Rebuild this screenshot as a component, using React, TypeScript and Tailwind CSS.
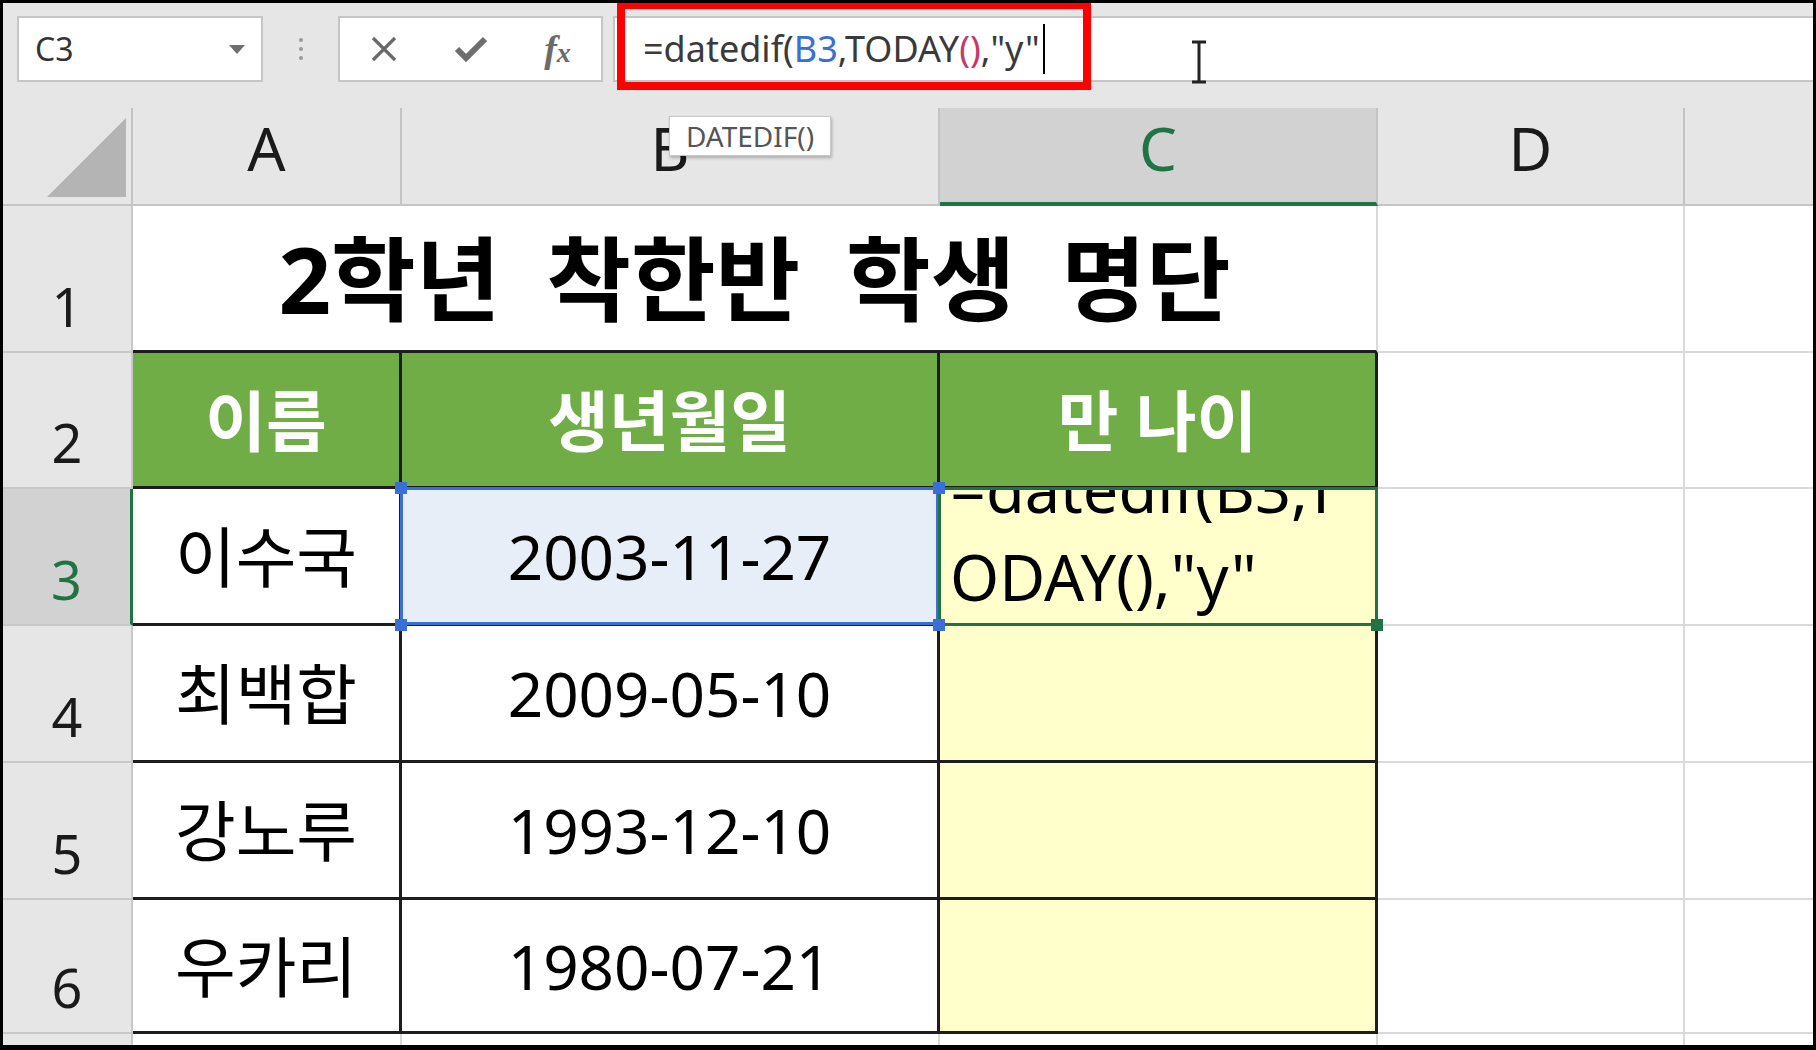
import React from "react";

const COLHEAD =
  "flex items-center justify-center border-r-2 border-b-2 border-[#c4c4c4] bg-[#e6e6e6] pb-[16px] text-[60px] leading-none text-[#1a1a1a]";
const ROWHEAD =
  "flex items-end justify-center border-r-2 border-b-2 border-[#c8c8c8] bg-[#e6e6e6] pb-[18px] text-[54px] leading-none text-[#1a1a1a]";
const GRID = "border-r-2 border-b-2 border-[#dadada] bg-white";
const TBL =
  "flex items-center justify-center border-r-[3px] border-b-[3px] border-[#1d1d1d] leading-none text-black";

const people = [
  { name: "이수국", birth: "2003-11-27" },
  { name: "최백합", birth: "2009-05-10" },
  { name: "강노루", birth: "1993-12-10" },
  { name: "우카리", birth: "1980-07-21" },
];

function Handle({ pos, color }: { pos: string; color: string }) {
  return <span className={`absolute z-20 h-[12px] w-[12px] ${pos} ${color}`} />;
}

export default function App() {
  return (
    <div className="relative flex h-[1050px] w-[1816px] flex-col overflow-hidden border-t-[3px] border-r-[3px] border-b-[5px] border-l-[3px] border-black bg-[#e6e6e6] font-['Noto_Sans','Noto_Sans_CJK_KR',sans-serif]">
      {/* FORMULA BAR */}
      <div className="flex h-[105px] shrink-0 items-start pt-[13px]">
        <div className="ml-[14px] flex h-[66px] w-[246px] items-center justify-between border-2 border-[#c6c6c6] bg-white pl-[16px] pr-[16px]">
          <span className="text-[32px] leading-none text-[#333]">C3</span>
          <svg width="16" height="9" viewBox="0 0 16 9">
            <polygon points="0,0 16,0 8,9" fill="#6f6f6f" />
          </svg>
        </div>
        <div className="flex h-[66px] w-[75px] flex-col items-center justify-center gap-[5px]">
          <span className="h-[4px] w-[4px] rounded-full bg-[#9a9a9a]" />
          <span className="h-[4px] w-[4px] rounded-full bg-[#9a9a9a]" />
          <span className="h-[4px] w-[4px] rounded-full bg-[#9a9a9a]" />
        </div>
        <div className="grid h-[66px] w-[265px] grid-cols-3 place-items-center border-2 border-[#c6c6c6] bg-white">
          <svg width="28" height="26" viewBox="0 0 28 26">
            <path d="M3 2 L25 24 M25 2 L3 24" stroke="#6a6a6a" strokeWidth="3.2" />
          </svg>
          <svg width="34" height="28" viewBox="0 0 34 28">
            <path d="M3 14 L12 23 L31 4" stroke="#6e6e6e" strokeWidth="6" fill="none" />
          </svg>
          <span className="font-['Liberation_Serif',serif] text-[38px] font-bold italic leading-none text-[#6b6b6b]">
            f<span className="text-[28px]">x</span>
          </span>
        </div>
        <div className="ml-[10px] flex h-[66px] flex-1 items-center border-2 border-r-0 border-[#c6c6c6] bg-white pl-[28px]">
          <span className="whitespace-nowrap text-[36px] leading-none text-[#3a3a3a]">
            =datedif(<span className="text-[#3a6fd3]">B3</span>,TODAY
            <span className="text-[#c8376a]">()</span>,"y"
          </span>
          <span className="ml-[3px] h-[50px] w-[2px] bg-black" />
        </div>
      </div>

      {/* SHEET */}
      <div className="grid flex-1 grid-cols-[130px_269px_538px_438px_307px_1fr] grid-rows-[98px_147px_136px_137px_137px_137px_134px_1fr]">
        {/* column header */}
        <div className="flex items-end justify-end border-r-2 border-b-2 border-[#c4c4c4] bg-[#e6e6e6] pr-[5px] pb-[7px]">
          <svg width="79" height="79" viewBox="0 0 79 79">
            <polygon points="79,0 79,79 0,79" fill="#b4b4b4" />
          </svg>
        </div>
        <div className={COLHEAD}>A</div>
        <div className={COLHEAD}>B</div>
        <div className="flex items-center justify-center border-r-2 border-b-4 border-r-[#c4c4c4] border-b-[#217346] bg-[#d2d2d2] pb-[14px] text-[60px] leading-none text-[#217346]">
          C
        </div>
        <div className={COLHEAD}>D</div>
        <div className="border-b-2 border-[#c4c4c4] bg-[#e6e6e6]" />

        {/* row 1 */}
        <div className={ROWHEAD}>1</div>
        <div className="col-span-3 flex items-center justify-center border-r-2 border-b-[3px] border-r-[#dadada] border-b-[#1d1d1d] bg-white pt-[2px]">
          <span className="text-[92px] font-bold leading-none text-black [word-spacing:22px]">
            2학년 착한반 학생 명단
          </span>
        </div>
        <div className={GRID} />
        <div className="border-b-2 border-[#dadada] bg-white" />

        {/* row 2 */}
        <div className={ROWHEAD}>2</div>
        {["이름", "생년월일", "만 나이"].map((h) => (
          <div key={h} className={`${TBL} bg-[#70ad47] text-[66px] font-bold text-white`}>
            {h}
          </div>
        ))}
        <div className={GRID} />
        <div className="border-b-2 border-[#dadada] bg-white" />

        {/* rows 3-6 */}
        {people.map((p, i) =>
          i === 0 ? (
            <React.Fragment key={p.name}>
              <div className="flex items-end justify-center border-r-[3px] border-b-2 border-r-[#217346] border-b-[#c8c8c8] bg-[#d2d2d2] pb-[18px] text-[54px] leading-none text-[#217346]">
                3
              </div>
              <div className={`${TBL} bg-white text-[66px]`}>{p.name}</div>
              <div className={`${TBL} relative bg-[#e8eef8] text-[62px]`}>
                {p.birth}
                <span className="absolute top-[-2px] right-[-2px] bottom-[-2px] left-[-2px] z-10 border-[3px] border-[#3a6fd6]" />
                <Handle pos="top-[-7px] left-[-7px]" color="bg-[#3a6fd6]" />
                <Handle pos="bottom-[-8px] left-[-7px]" color="bg-[#3a6fd6]" />
              </div>
              <div className={`${TBL} relative bg-[#ffffcc]`}>
                <div className="flex h-full w-full flex-col items-start justify-end overflow-hidden pb-[2px] pl-[10px] text-[63px] leading-[88px]">
                  <div className="whitespace-nowrap">=datedif(B3,T</div>
                  <div className="whitespace-nowrap">ODAY(),"y"</div>
                </div>
                <span className="absolute top-[-2px] right-[-3px] bottom-[-3px] left-[-2px] z-10 border-[3px] border-[#217346]" />
                <Handle pos="top-[-7px] left-[-7px]" color="bg-[#3a6fd6]" />
                <Handle pos="bottom-[-8px] left-[-7px]" color="bg-[#3a6fd6]" />
                <Handle pos="bottom-[-8px] right-[-8px]" color="bg-[#217346]" />
              </div>
              <div className={GRID} />
              <div className="border-b-2 border-[#dadada] bg-white" />
            </React.Fragment>
          ) : (
            <React.Fragment key={p.name}>
              <div className={ROWHEAD}>{i + 3}</div>
              <div className={`${TBL} bg-white text-[66px]`}>{p.name}</div>
              <div className={`${TBL} bg-white text-[62px]`}>{p.birth}</div>
              <div className={`${TBL} bg-[#ffffcc]`} />
              <div className={GRID} />
              <div className="border-b-2 border-[#dadada] bg-white" />
            </React.Fragment>
          )
        )}

        {/* row 7 (cut off) */}
        <div className="border-r-2 border-[#c8c8c8] bg-[#e6e6e6]" />
        <div className="border-r-2 border-[#dadada] bg-white" />
        <div className="border-r-2 border-[#dadada] bg-white" />
        <div className="border-r-2 border-[#dadada] bg-white" />
        <div className="border-r-2 border-[#dadada] bg-white" />
        <div className="bg-white" />
      </div>

      {/* overlays */}
      <div className="absolute top-[113px] left-[666px] z-30 flex h-[40px] w-[162px] items-center justify-center border border-[#c8c8c8] bg-white text-[28px] leading-none text-[#555] shadow-[1px_2px_3px_rgba(0,0,0,0.25)]">
        DATEDIF()
      </div>
      <div className="absolute top-[-2px] left-[614px] z-30 h-[89px] w-[474px] border-[8px] border-[#ff0000]" />
      <svg className="absolute top-[37px] left-[1187px] z-30" width="18" height="44" viewBox="0 0 18 44">
        <path d="M2 2 H16 M9 2 V42 M2 42 H16" stroke="#222" strokeWidth="3" fill="none" />
      </svg>
    </div>
  );
}
